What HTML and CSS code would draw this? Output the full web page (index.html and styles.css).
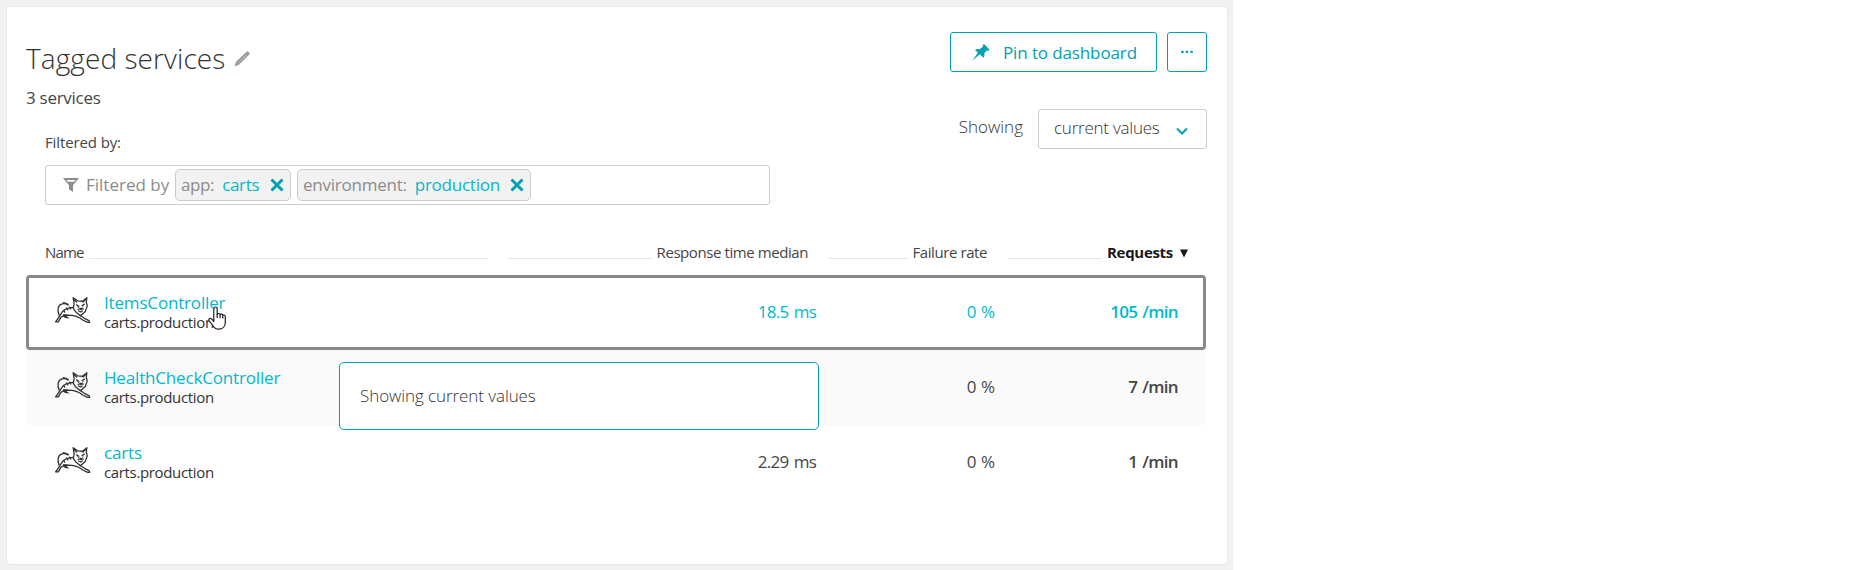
FILE: index.html
```html
<!DOCTYPE html>
<html lang="en">
<head>
<meta charset="utf-8">
<title>Tagged services</title>
<link rel="stylesheet" href="styles.css">
</head>
<body>
<svg class="defs" width="0" height="0">
  <symbol id="cat" viewBox="0 0 36 28">
    <g fill="none" stroke="#333" stroke-width="1.250" stroke-linecap="round" stroke-linejoin="round">
      <path d="M18.6 1.500l1 6-.8 4.500 2.400 3.500 4.600 3.700 4.600-4.200 2-5.500-1-3.500.6-4.500-4.300 3.500-4.700-.4z"/>
      <path d="M19.500 3.500l2.500 2.200M30.500 3.500l-2.300 2.300M22 8.500l2.200 1.300M29.500 7.800l-2.300 1.500M23.500 13l2.500-1.200 2.500.8M24 14.500l2 1 1.500-1"/>
      <path d="M18.500 11c-4 .2-8 1.600-10.500 4.500-2 2.500-3.500 6-6.500 9.500h2.700l2.600-4.500c1.800-1.500 3.800-1.800 6.500-2 7 0 11 1.500 15 5l4.500 2h2l-.8-1.700-4.500-2.200-4.500-3.200"/>
      <path d="M5 18.500C3 14 3.500 8.500 8 7.500c2-.5 4 0 5.500 1.200M9 6.300c2 0 3 .7 4.800 1.700"/>
      <path d="M12 11.500l1.500 2M15 10.700l1.300 1.800M9.500 14l1 1.500"/>
    </g>
    <path d="M9 17.500l4.500.5-1.200 1.500 2.900 2.400-4.500-.7-2.200-2zM22 9.800l3 .9-1.200.9zM29.300 9.500l-2.300 1.400 1 .5zM24.500 12.500h3.300l-1.600 1.600z" fill="#333"/>
  </symbol>
  <symbol id="cross" viewBox="0 0 14 14">
    <path d="M1.500 1.500l11 11M12.500 1.500l-11 11" stroke="#00a1b2" stroke-width="3" fill="none"/>
  </symbol>
</svg>
<div class="page">
  <main class="card">
    <header class="top">
      <div class="intro">
        <div class="title-row">
          <h1>Tagged services</h1>
          <svg class="pencil" width="16" height="16" viewBox="0 0 16 16">
            <path d="M.5 15.500l1.500-4.800L12.300 1l1.500-.7 1.900 1.900-.7 1.500L5 13.700z" fill="#999"/>
            <path d="M4 12.200L12.500 3.800" stroke="#c4c4c4" fill="none"/>
          </svg>
        </div>
        <p class="count">3 services</p>
        <div class="filter">
          <p class="filter-label">Filtered by:</p>
          <div class="filter-box">
            <svg class="funnel" width="16" height="14" viewBox="0 0 16 14">
              <path d="M0 0h16L10 7.300V14l-4-2.800V7.300z" fill="#8c8c8c"/>
              <path d="M3.500 2h9l-1.300 1.700H4.800z" fill="#fff"/>
            </svg>
            <span class="filter-text">Filtered by</span>
            <span class="chip chip-app"><span class="key">app:</span><span class="val">carts</span><svg width="14" height="14"><use href="#cross"/></svg></span>
            <span class="chip chip-env"><span class="key">environment:</span><span class="val">production</span><svg width="14" height="14"><use href="#cross"/></svg></span>
          </div>
        </div>
      </div>
      <div class="actions">
        <div class="buttons">
          <button class="btn pin">
            <svg width="18" height="17" viewBox="0 0 18 17">
              <path d="M12 0l5.700 5.700-1.500 1-1.300-.2-2.600 2.800c.4 1.700.2 3.200-.8 4.400L7.700 10.300.3 16.700 5.800 8.800 3 5.900c1.500-1 3-1.200 4.600-.7l3.300-2.500-.2-1.400z" fill="#00a1b2"/>
            </svg>
            <span>Pin to dashboard</span>
          </button>
          <button class="btn more" aria-label="More">
            <svg width="12" height="4" viewBox="0 0 12 4"><path d="M.2.700h2.400v2.400H.2zM4.800.700h2.400v2.400H4.800zM9.400.700h2.400v2.400H9.400z" fill="#00a1b2"/></svg>
          </button>
        </div>
        <div class="showing">
          <span class="showing-label">Showing</span>
          <div class="select">
            <span>current values</span>
            <svg width="12" height="9" viewBox="0 0 12 9"><path d="M1 1.500l5 5 5-5" stroke="#00a1b2" stroke-width="2" fill="none"/></svg>
          </div>
        </div>
      </div>
    </header>

    <section class="table">
      <div class="thead">
        <div class="th th-name"><span>Name</span><i></i></div>
        <div class="th th-resp"><i></i><span>Response time median</span></div>
        <div class="th th-fail"><i></i><span>Failure rate</span></div>
        <div class="th th-req"><i></i><span>Requests</span><svg width="8" height="9" viewBox="0 0 8 9"><path d="M0 .5h8L4 8.500z" fill="#191919"/></svg></div>
      </div>
      <div class="row selected">
        <div class="service"><svg width="37" height="29"><use href="#cat"/></svg><div><a class="name">ItemsController</a><div class="sub">carts.production</div></div></div>
        <div class="num time">18.5 ms</div><div class="num">0 %</div><div class="num req">105 /min</div>
      </div>
      <div class="row alt">
        <div class="service"><svg width="37" height="29"><use href="#cat"/></svg><div><a class="name">HealthCheckController</a><div class="sub">carts.production</div></div></div>
        <div class="num time"></div><div class="num">0 %</div><div class="num req">7 /min</div>
      </div>
      <div class="row">
        <div class="service"><svg width="37" height="29"><use href="#cat"/></svg><div><a class="name">carts</a><div class="sub">carts.production</div></div></div>
        <div class="num time">2.29 ms</div><div class="num">0 %</div><div class="num req">1 /min</div>
      </div>
      <div class="tooltip">Showing current values</div>
      <svg class="cursor" width="18" height="24" viewBox="0 0 18 24">
        <path d="M5.800 15.500V2.800c0-2.400 3.400-2.400 3.400 0v5.500c.6-1.200 2.700-1 2.900.4.700-1 2.600-.8 2.700.7.900-.7 2.500-.2 2.500 1.300v5.500c0 4-2.500 7-6.500 7-3.500 0-5-1.800-6.300-4.200L1.200 14.800c-1-1.500.7-3.200 2.200-2.100z" fill="#fff" stroke="#1c1c2b" stroke-width="1.200" stroke-linejoin="round"/>
        <path d="M9.200 8v4M12.100 8.800v3.400M14.800 9.600v2.800" stroke="#1c1c2b" stroke-width="1.200" fill="none"/>
      </svg>
    </section>
  </main>
</div>
</body>
</html>
```

FILE: styles.css
```css
* { box-sizing: border-box; }
body { margin: 0; background: #fff; color: #454646; font-family: "Open Sans", "Noto Sans", sans-serif; font-size: 17px; line-height: 22px; }
h1, p { margin: 0; }
svg { display: block; flex: none; }
.defs { position: absolute; }
.page { width: 1233px; height: 570px; padding: 6px 5px 6px 6px; background: #f1f1f1; }
.card { height: 559px; padding: 25px 20px 0 19px; background: #fff; border: 1px solid #e6eaea; border-radius: 4px; }

.top { display: flex; justify-content: space-between; }
.intro { padding-top: 6px; }
.title-row { display: flex; gap: 9px; height: 40px; }
h1 { color: #333; font-size: 28px; font-weight: 300; line-height: 40px; letter-spacing: .08px; white-space: nowrap; }
.pencil { margin-top: 13px; }
.count { margin-top: 8px; line-height: 24px; letter-spacing: -.28px; }
.filter { margin: 22px 0 0 19px; }
.filter-label { font-size: 15px; line-height: 20px; letter-spacing: -.12px; }
.filter-box { display: flex; align-items: center; width: 725px; height: 40px; margin-top: 13px; padding-left: 17px; border: 1px solid #ccc; border-radius: 3px; color: #8c8c8c; }
.filter-text { width: 89px; margin-left: 7px; white-space: nowrap; }
.chip { display: flex; align-items: center; height: 32px; border: 1px solid #ccc; border-radius: 5px; background: #f2f2f2; padding: 0 6px 0 5px; white-space: nowrap; }
.chip .val { margin-left: 8px; color: #00b9cc; }
.chip svg { margin-left: auto; }
.chip-app { width: 116px; }
.chip-app .key { letter-spacing: -.4px; }
.chip-app .val { letter-spacing: -.3px; }
.chip-env { width: 234px; margin-left: 6px; }
.chip-env .key, .chip-env .val { letter-spacing: -.24px; }

.actions { display: flex; flex-direction: column; align-items: flex-end; gap: 37px; }
.buttons { display: flex; gap: 10px; }
.btn { display: flex; align-items: center; height: 40px; border: 1px solid #00a1b2; border-radius: 3px; background: #fff; color: #00a1b2; font: inherit; padding: 0; white-space: nowrap; }
.pin { width: 207px; padding-left: 21px; gap: 13px; letter-spacing: -.12px; }
.pin span { padding-top: 2px; }
.more { width: 40px; justify-content: center; }
.showing { display: flex; color: #333; font-weight: 300; }
.showing-label { margin: 7px 15px 0 0; }
.select { display: flex; align-items: center; justify-content: space-between; width: 169px; height: 40px; padding: 0 18px 2px 15px; border: 1px solid #ccc; border-radius: 3px; letter-spacing: -.23px; }
.select svg { margin-top: 6px; }

.table { position: relative; margin-top: 37px; }
.thead { display: grid; grid-template-columns: 444px 319px 179px 201px; height: 33px; margin-left: 19px; font-size: 15px; line-height: 20px; letter-spacing: -.42px; }
.th { display: flex; height: 20px; gap: 5px; white-space: nowrap; }
.th i { flex: 1; height: 1px; margin-top: 16px; background: #e6e6e6; }
.th-name span { letter-spacing: -.85px; }
.th-resp { padding-left: 19px; }
.th-fail, .th-req { padding-left: 21px; }
.th-req { color: #191919; font-weight: 700; letter-spacing: -.3px; }
.th-req svg { margin: 7px 0 0 2px; }
.row { display: grid; grid-template-columns: 463px 327px 179px 183px; align-items: center; height: 75px; padding-bottom: 2px; width: 1180px; }
.alt { background: #fafafa; }
.selected { border-radius: 4px; outline: 3px solid #898989; outline-offset: -3px; position: relative; }
.service { display: flex; align-items: center; gap: 13px; padding-left: 28px; }
.service > svg { margin-top: -2px; }
.name { display: block; color: #00b9cc; letter-spacing: -.17px; }
.sub { margin: -1px 0 1px; color: #333; font-size: 15px; line-height: 18px; letter-spacing: -.35px; }
.num { text-align: right; }
.time { letter-spacing: -.75px; word-spacing: 1.500px; }
.req { font-weight: 600; letter-spacing: -.65px; word-spacing: 1px; }
.selected .num { color: #00b9cc; }

.tooltip { position: absolute; left: 313px; top: 120px; width: 480px; height: 68px; padding: 22px 20px; border: 1px solid #00a1b2; border-radius: 5px; background: #fff; color: #333; font-weight: 300; letter-spacing: -.08px; }
.cursor { position: absolute; left: 182px; top: 64px; }
```
